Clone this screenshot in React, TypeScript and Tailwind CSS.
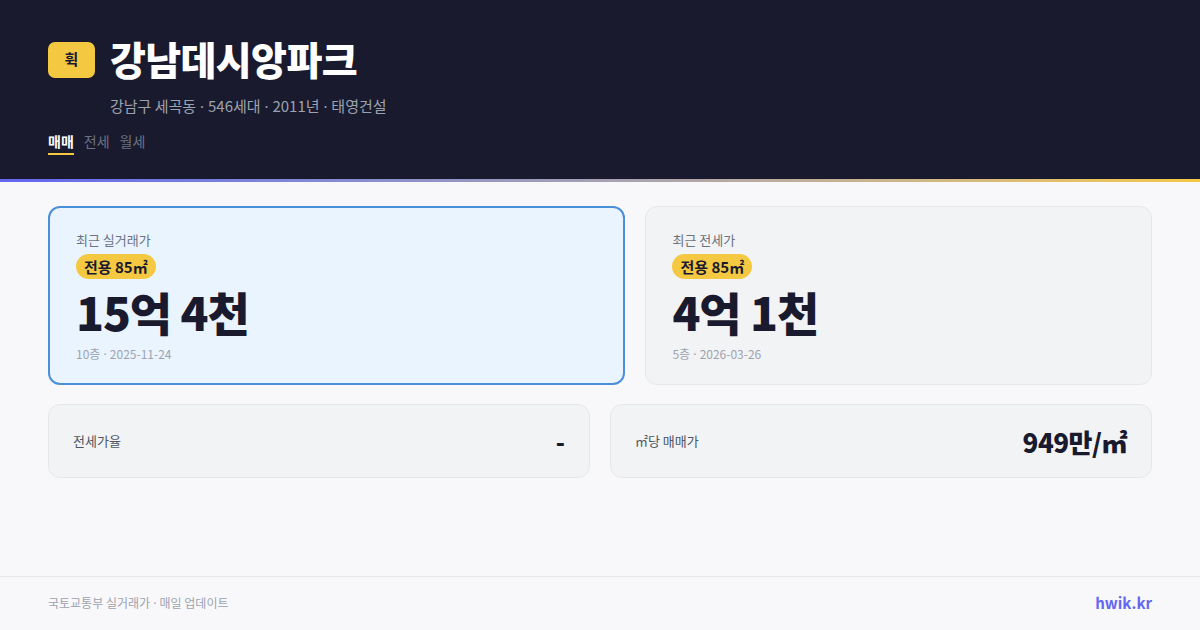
const font = {
  fontFamily: '"Noto Sans CJK KR", "Noto Sans", sans-serif',
};

type PriceCard = {
  label: string;
  area: string;
  price: string;
  floor: string;
  date: string;
  active?: boolean;
};

const priceCards: PriceCard[] = [
  {
    label: "최근 실거래가",
    area: "전용 85㎡",
    price: "15억 4천",
    floor: "10층",
    date: "2025-11-24",
    active: true,
  },
  {
    label: "최근 전세가",
    area: "전용 85㎡",
    price: "4억 1천",
    floor: "5층",
    date: "2026-03-26",
  },
];

// narrow middle dot, the CJK one is full width
function Dot() {
  return <span className="font-['Noto_Sans']"> · </span>;
}

function App() {
  return (
    <div
      className="flex h-[630px] w-[1200px] flex-col bg-[#f8f8fa]"
      style={font}
    >
      <header className="h-[179px] bg-[#1a1a2e] px-12 pt-[30px]">
        <div className="flex items-center gap-[15px]">
          <div className="mt-[3px] flex h-[36px] w-[47px] items-center justify-center rounded-[7px] bg-[#f5c842] text-[15px] font-bold text-[#1a1a2e]">
            휙
          </div>
          <h1 className="text-[39px] font-black leading-[56px] tracking-[-0.6px] text-white">
            강남데시앙파크
          </h1>
        </div>
        <p className="ml-[62px] mt-[9px] text-[15px] leading-[22px] text-[#9ca3af]">
          강남구 세곡동
          <Dot />
          546세대
          <Dot />
          2011년
          <Dot />
          태영건설
        </p>
        <nav className="mt-[14px] flex gap-[10px] text-[14px] leading-[20px]">
          <span className="border-b-2 border-[#f5c842] pb-[2px] font-bold text-white">
            매매
          </span>
          <span className="text-[#6b7280]">전세</span>
          <span className="text-[#6b7280]">월세</span>
        </nav>
      </header>
      <div className="h-[3px] bg-gradient-to-r from-[#6366f1] to-[#f5c842]" />

      <main className="flex-1 px-12 pt-[24px]">
        <div className="grid grid-cols-[1.14fr_1fr] gap-5">
          {priceCards.map((card) => (
            <div
              key={card.label}
              className={
                card.active
                  ? "h-[179px] rounded-[12px] border-2 border-[#4a90d9] bg-[#eaf4fe] px-[26px] pt-[23px]"
                  : "h-[179px] rounded-[12px] border border-[#e5e7eb] bg-[#f2f3f5] px-[26px] pt-[24px]"
              }
            >
              <p className="text-[13px] leading-[18px] text-[#6b7280]">
                {card.label}
              </p>
              <span className="mt-[5px] inline-block rounded-full bg-[#f5c842] px-[8px] text-[15px] font-bold leading-[25px] text-[#1a1a2e]">
                {card.area}
              </span>
              <p className="mt-[4px] text-[46px] font-black leading-[56px] tracking-[-1.1px] text-[#1a1a2e]">
                {card.price}
              </p>
              <p className="mt-[6px] text-[12px] leading-[18px] text-[#9ca3af]">
                {card.floor}
                <Dot />
                {card.date}
              </p>
            </div>
          ))}
        </div>

        <div className="mt-[19px] grid grid-cols-2 gap-5">
          <div className="flex h-[74px] items-center justify-between rounded-[12px] border border-[#e5e7eb] bg-[#f2f3f5] px-[24px]">
            <span className="text-[13px] text-[#4b5563]">전세가율</span>
            <span className="text-[24px] font-black text-[#1a1a2e]">-</span>
          </div>
          <div className="flex h-[74px] items-center justify-between rounded-[12px] border border-[#e5e7eb] bg-[#f2f3f5] px-[24px]">
            <span className="text-[13px] text-[#4b5563]">㎡당 매매가</span>
            <span className="text-[26px] font-black tracking-[-0.5px] text-[#1a1a2e]">
              949만/㎡
            </span>
          </div>
        </div>
      </main>

      <footer className="flex h-[54px] items-center justify-between border-t border-[#e5e7eb] px-12">
        <span className="text-[12px] text-[#9ca3af]">
          국토교통부 실거래가
          <Dot />
          매일 업데이트
        </span>
        <span className="text-[15px] font-bold text-[#6366f1]">hwik.kr</span>
      </footer>
    </div>
  );
}

export default App;
